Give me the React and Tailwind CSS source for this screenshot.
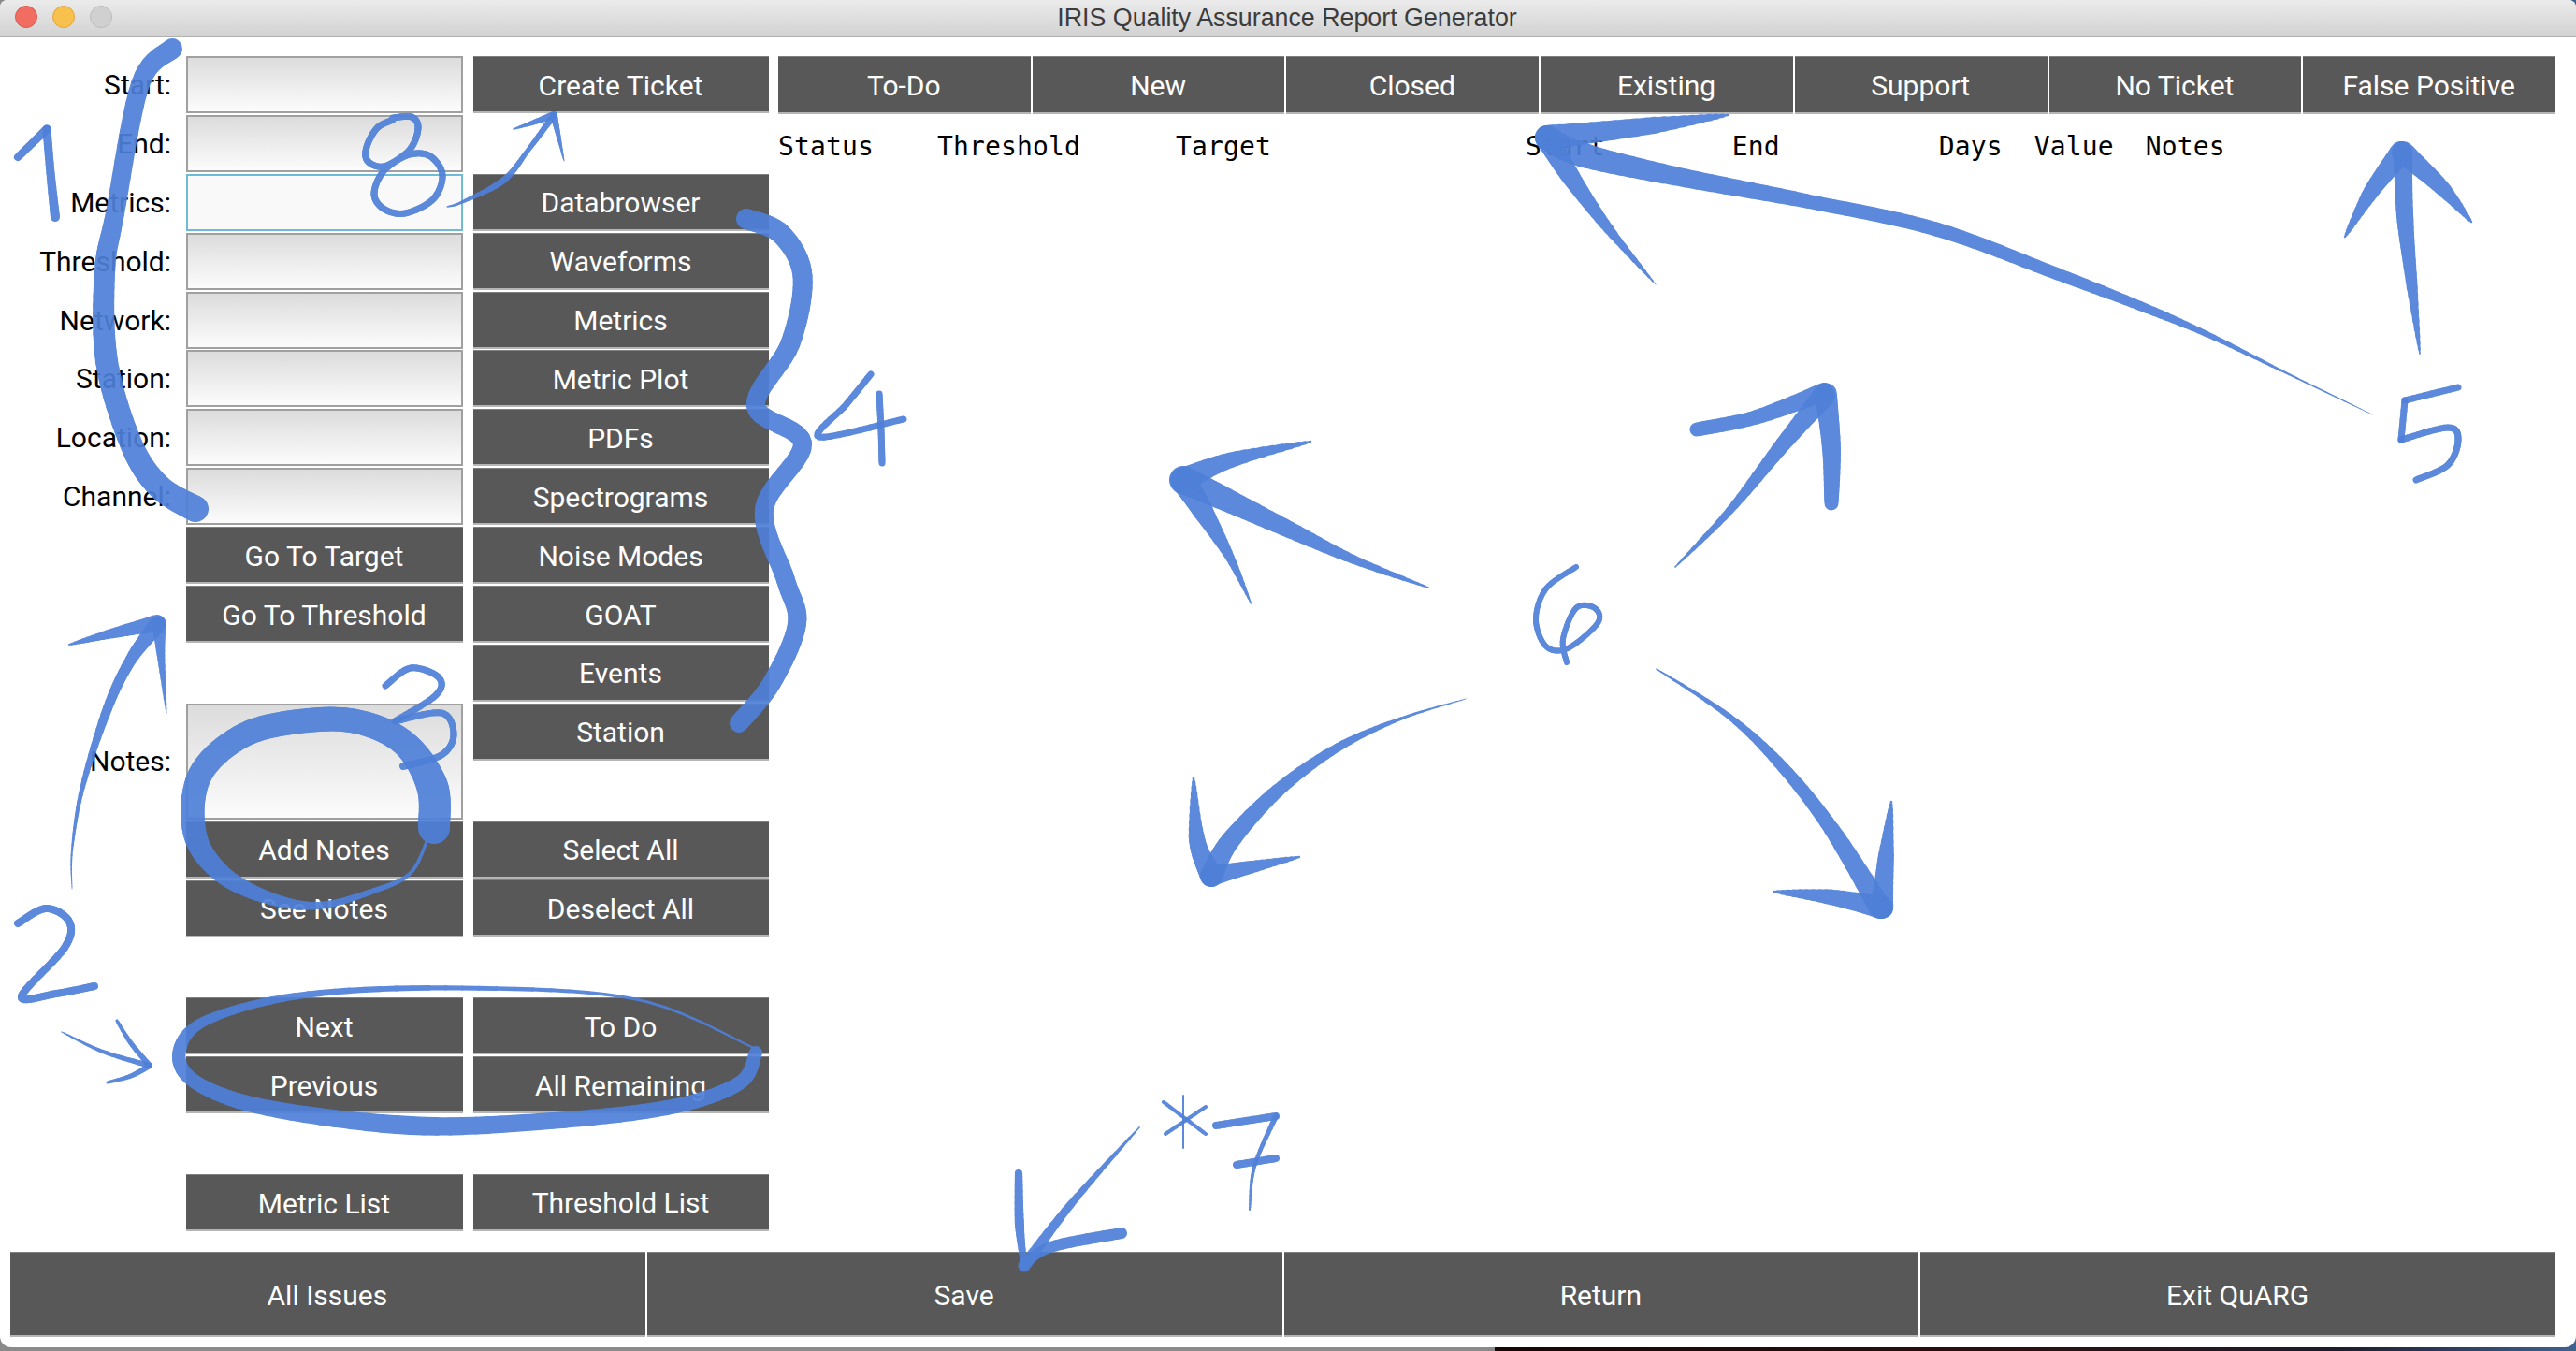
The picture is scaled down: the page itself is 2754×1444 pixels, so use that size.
import React from 'react';

const brushPoints = (pts) => {
  // catmull-rom through [x, y, width] points
  const out = [];
  for (let i = 0; i < pts.length - 1; i++) {
    const p0 = pts[Math.max(i - 1, 0)];
    const p1 = pts[i];
    const p2 = pts[i + 1];
    const p3 = pts[Math.min(i + 2, pts.length - 1)];
    for (let s = 0; s < 10; s++) {
      const t = s / 10;
      const f = (k) =>
        0.5 * (2 * p1[k] + (p2[k] - p0[k]) * t + (2 * p0[k] - 5 * p1[k] + 4 * p2[k] - p3[k]) * t * t + (3 * p1[k] - p0[k] - 3 * p2[k] + p3[k]) * t * t * t);
      out.push([f(0), f(1), p1[2] + (p2[2] - p1[2]) * t]);
    }
  }
  out.push(pts[pts.length - 1]);
  return out;
};

const Brush = ({ pts }) => {
  const sampled = brushPoints(pts);
  return (
    <g opacity="0.92">
      {sampled.slice(1).map((p, i) => (
        <line
          key={i}
          x1={sampled[i][0]}
          y1={sampled[i][1]}
          x2={p[0]}
          y2={p[1]}
          strokeWidth={Math.max(p[2], 0.6)}
        />
      ))}
    </g>
  );
};

const strokes = [
  // 1
  [[19, 168, 8], [50, 138, 9]],
  [[50, 138, 9], [54, 185, 9], [59, 232, 10]],
  // big bracket over the labels
  [[184, 52, 22], [150, 90, 20], [123, 228, 20], [112, 290, 22], [114, 386, 24], [140, 474, 24], [170, 520, 26], [209, 544, 28]],
  // 8
  [[420, 128, 7], [403, 137, 7], [392, 157, 7], [393, 172, 7], [410, 178, 7], [438, 165, 7], [460, 167, 7], [473, 187, 7], [463, 213, 7], [433, 228, 7], [410, 223, 7], [400, 207, 7], [410, 183, 7], [438, 160, 7], [447, 137, 7], [440, 125, 7], [420, 126, 7]],
  // 8 arrow
  [[478, 221, 1], [494, 216, 3], [538, 193, 7], [565, 160, 5], [590, 126, 7]],
  [[549, 138, 1], [570, 131, 5], [592, 123, 8]],
  [[592, 123, 8], [597, 145, 5], [603, 172, 1]],
  // } bracket
  [[798, 234, 22], [835, 250, 22], [858, 295, 21], [845, 367, 21], [808, 434, 20], [858, 474, 20], [817, 544, 20], [840, 620, 20], [852, 667, 20], [825, 730, 20], [790, 773, 20]],
  // 4
  [[931, 400, 7], [905, 432, 7], [876, 467, 7], [966, 448, 7]],
  [[940, 421, 7], [942, 460, 7], [943, 495, 7]],
  // 3
  [[412, 733, 7], [439, 714, 7], [469, 724, 7], [466, 743, 7], [422, 771, 7]],
  [[422, 771, 7], [472, 762, 7], [485, 785, 7], [472, 807, 7], [431, 819, 8]],
  // notes circle
  [[464, 885, 34], [462, 840, 34], [433, 795, 28], [385, 772, 26], [329, 770, 26], [262, 785, 26], [214, 828, 26], [208, 890, 25], [236, 933, 20], [285, 959, 14], [340, 968, 8], [400, 952, 6], [439, 933, 4], [458, 895, 3]],
  // 2
  [[19, 987, 8], [49, 971, 8], [74, 985, 8], [69, 1013, 8], [23, 1065, 8], [60, 1062, 8], [101, 1054, 8]],
  // arc arrow up to Go To Threshold
  [[77, 950, 0.6], [77, 909, 2], [88, 842, 5], [115, 757, 10], [140, 705, 12], [168, 668, 18]],
  [[74, 689, 1], [120, 677, 10], [168, 666, 18]],
  [[170, 666, 16], [172, 700, 9], [178, 762, 1]],
  // small arrow to Next / Previous
  [[66, 1103, 1], [110, 1124, 4], [160, 1139, 6]],
  [[125, 1091, 3], [140, 1115, 5], [160, 1139, 6]],
  [[160, 1139, 6], [140, 1150, 5], [115, 1157, 3]],
  // ellipse
  [[806, 1120, 2], [680, 1068, 3], [494, 1056, 5], [329, 1063, 7], [224, 1089, 10], [192, 1122, 14], [208, 1156, 15], [285, 1184, 17], [439, 1203, 20], [576, 1199, 18], [713, 1184, 16], [790, 1158, 15], [808, 1125, 14]],
  // long arrow from 5 to the header
  [[2536, 443, 0.6], [2447, 400, 2], [2359, 357, 6], [2288, 327, 10], [2200, 293, 13], [2070, 245, 15], [1932, 215, 15], [1790, 188, 20], [1690, 165, 26], [1654, 147, 26]],
  [[1847, 123, 1], [1760, 135, 18], [1654, 147, 26]],
  [[1654, 147, 26], [1680, 190, 20], [1720, 245, 11], [1770, 304, 1]],
  // false positive arrow
  [[2587, 378, 0.6], [2578, 300, 12], [2571, 230, 18], [2569, 167, 20]],
  [[2507, 253, 1], [2535, 205, 16], [2567, 163, 24]],
  [[2642, 237, 1], [2610, 200, 16], [2569, 163, 24]],
  // 5
  [[2628, 414, 7], [2571, 428, 7]],
  [[2571, 428, 7], [2567, 470, 7]],
  [[2567, 470, 7], [2617, 457, 7], [2628, 470, 7], [2617, 497, 7], [2583, 513, 7]],
  // 6
  [[1685, 606, 6], [1653, 629, 6], [1642, 662, 6], [1653, 691, 6], [1676, 693, 6], [1708, 666, 6], [1705, 650, 6], [1685, 650, 6], [1671, 683, 6], [1675, 708, 6]],
  // top left arrow
  [[1527, 628, 1], [1447, 598, 9], [1372, 563, 18], [1298, 528, 26], [1265, 513, 30]],
  [[1401, 472, 1], [1315, 492, 16], [1265, 513, 26]],
  [[1265, 513, 28], [1286, 546, 22], [1315, 596, 10], [1338, 646, 1]],
  // top right arrow
  [[1791, 606, 1], [1849, 546, 8], [1906, 475, 16], [1950, 423, 24]],
  [[1814, 459, 15], [1877, 446, 15], [1950, 419, 20]],
  [[1952, 421, 24], [1958, 480, 20], [1958, 538, 15]],
  // bottom left arrow
  [[1567, 747, 0.6], [1498, 768, 3], [1430, 799, 9], [1366, 845, 14], [1315, 899, 20], [1295, 936, 24]],
  [[1276, 832, 1], [1280, 899, 17], [1295, 936, 24]],
  [[1389, 916, 1], [1332, 928, 14], [1295, 936, 22]],
  // bottom right arrow
  [[1771, 715, 1], [1849, 766, 6], [1906, 820, 12], [1958, 886, 16], [2010, 970, 24]],
  [[2022, 857, 1], [2016, 919, 17], [2012, 970, 24]],
  [[1897, 953, 1], [1958, 959, 16], [2012, 970, 24]],
  // *
  [[1265, 1171, 2], [1265, 1227, 2]],
  [[1244, 1178, 4], [1289, 1212, 4]],
  [[1289, 1183, 4], [1246, 1212, 4]],
  // 7
  [[1300, 1203, 8], [1364, 1193, 8]],
  [[1364, 1193, 6], [1341, 1247, 4], [1336, 1293, 2]],
  [[1322, 1245, 8], [1364, 1238, 8]],
  // arrow to Save
  [[1218, 1205, 1], [1145, 1287, 8], [1095, 1353, 13]],
  [[1089, 1254, 8], [1090, 1310, 10], [1095, 1353, 6]],
  [[1199, 1318, 12], [1123, 1333, 12], [1095, 1353, 8]],
];

const Btn = ({ label, className = 'h-[61px]' }) => (
  <button className={`${className} w-full shrink-0 pt-[3px] pr-px bg-[#585858] border-t border-t-[#808080] border-b-2 border-b-[#b5b5b5] text-white text-[30px] leading-none`}>
    {label}
  </button>
);

const Field = ({ label, focus }) => (
  <div className="flex h-[61px] shrink-0">
    <label className="w-[183px] mr-[16px] text-right text-black text-[30px] leading-[61px]">{label}</label>
    {focus ? (
      <input className="flex-1 min-w-0 bg-[#f9f9f9] border-2 border-[#6cbcd8]" />
    ) : (
      <input className="flex-1 min-w-0 bg-gradient-to-b from-[#dcdcdc] to-[#fcfcfc] border-2 border-[#a0a0a0]" />
    )}
  </div>
);

const tabs = ['To-Do', 'New', 'Closed', 'Existing', 'Support', 'No Ticket', 'False Positive'];
const tools = ['Databrowser', 'Waveforms', 'Metrics', 'Metric Plot', 'PDFs', 'Spectrograms', 'Noise Modes', 'GOAT', 'Events', 'Station'];
const fields = ['Start:', 'End:', 'Metrics:', 'Threshold:', 'Network:', 'Station:', 'Location:', 'Channel:'];
const footer = ['All Issues', 'Save', 'Return', 'Exit QuARG'];

export default function App() {
  return (
    <div className="relative w-[2754px] h-[1444px] overflow-hidden bg-[linear-gradient(90deg,#8a8a8a_0,#8a8a8a_1598px,#160606_1598px,#2a1010_2150px,#1c1c2c_2500px,#3f6290_2754px)] font-['Roboto',sans-serif]">
      <div className="flex flex-col h-[1440px] bg-white rounded-t-lg rounded-b-[12px]">
        {/* title bar */}
        <div className="relative flex items-center justify-center h-10 shrink-0 bg-gradient-to-b from-[#ebebeb] to-[#d2d2d2] border-b border-[#b1b1b1] rounded-t-lg">
          <div className="absolute left-[16px] top-[6px] flex gap-[16px]">
            <span className="w-6 h-6 rounded-full bg-[#f16c61] border border-[#dc5a50]" />
            <span className="w-6 h-6 rounded-full bg-[#f8c04d] border border-[#e0a63e]" />
            <span className="w-6 h-6 rounded-full bg-[#d0d0d0] border border-[#bcbcbc]" />
          </div>
          <span className="text-[26.8px] text-[#3c3c3c] mr-[2px] font-['Liberation_Sans',sans-serif]">IRIS Quality Assurance Report Generator</span>
        </div>

        <div className="flex pt-[20px] pr-[22px]">
          {/* fields and buttons on the left */}
          <div className="flex flex-col w-[495px] shrink-0 gap-[1.9px]">
            {fields.map((f) => (
              <Field key={f} label={f} focus={f === 'Metrics:'} />
            ))}
            <div className="ml-[199px] flex flex-col gap-[1.9px]">
              <Btn label="Go To Target" />
              <Btn label="Go To Threshold" />
            </div>
            <div className="flex h-[124px] mt-[62.9px] shrink-0">
              <label className="w-[183px] mr-[16px] text-right text-black text-[30px] self-center">Notes:</label>
              <div className="flex-1 bg-gradient-to-b from-[#dcdcdc] to-[#fcfcfc] border-2 border-[#a0a0a0]" />
            </div>
            <div className="ml-[199px] flex flex-col gap-[1.9px]">
              <Btn label="Add Notes" />
              <Btn label="See Notes" />
              <div className="h-[61px]" />
              <Btn label="Next" />
              <Btn label="Previous" />
              <div className="h-[61px]" />
              <Btn label="Metric List" />
            </div>
          </div>

          {/* tool buttons */}
          <div className="flex flex-col w-[316px] shrink-0 ml-[11px] gap-[1.9px]">
            <Btn label="Create Ticket" />
            <div className="h-[61px]" />
            {tools.map((t) => (
              <Btn key={t} label={t} />
            ))}
            <div className="h-[61px]" />
            <Btn label="Select All" />
            <Btn label="Deselect All" />
            <div className="h-[61px]" />
            <Btn label="To Do" />
            <Btn label="All Remaining" />
            <div className="h-[61px]" />
            <Btn label="Threshold List" />
          </div>

          {/* status tabs and table header */}
          <div className="flex flex-col flex-1 min-w-0 ml-[10px]">
            <div className="grid grid-cols-7 gap-[2px]">
              {tabs.map((t) => (
                <Btn key={t} label={t} className="h-[62px]" />
              ))}
            </div>
            <div className="mt-[20px] text-[28px] leading-[30px] tracking-[0.14px] text-black whitespace-pre font-['DejaVu_Sans_Mono',monospace]">
              {'Status    Threshold      Target                Start        End          Days  Value  Notes'}
            </div>
          </div>
        </div>

        {/* bottom row */}
        <div className="grid grid-cols-4 gap-[2px] mt-[22px] ml-[11px] mr-[22px]">
          {footer.map((f) => (
            <Btn key={f} label={f} className="h-[91px]" />
          ))}
        </div>
      </div>

      {/* hand drawn annotations over the app */}
      <svg
        viewBox="0 0 2754 1444"
        fill="none"
        stroke="#4f80d8"
        strokeLinecap="round"
        className="absolute inset-0 w-[2754px] h-[1444px] pointer-events-none"
      >
        {strokes.map((pts, i) => (
          <Brush key={i} pts={pts} />
        ))}
      </svg>
    </div>
  );
}
